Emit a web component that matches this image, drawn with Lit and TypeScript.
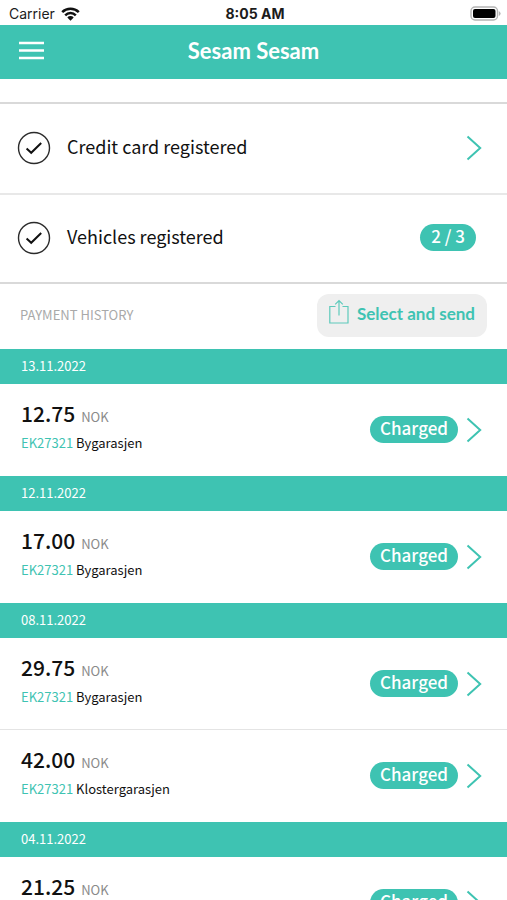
import { LitElement, html, svg, css } from "lit";
import { customElement, property } from "lit/decorators.js";

interface Payment {
  amount: string;
  plate: string;
  garage: string;
}

interface PaymentDay {
  date: string;
  payments: Payment[];
}

const plate = "EK27321";

const days: PaymentDay[] = [
  { date: "13.11.2022", payments: [{ amount: "12.75", plate, garage: "Bygarasjen" }] },
  { date: "12.11.2022", payments: [{ amount: "17.00", plate, garage: "Bygarasjen" }] },
  {
    date: "08.11.2022",
    payments: [
      { amount: "29.75", plate, garage: "Bygarasjen" },
      { amount: "42.00", plate, garage: "Klostergarasjen" },
    ],
  },
  { date: "04.11.2022", payments: [{ amount: "21.25", plate, garage: "Bygarasjen" }] },
];

const chevron = html`<svg class="chevron" width="16" height="26" viewBox="0 0 16 26" aria-hidden="true">
  ${svg`<path d="M1.5 1.5 L14.2 13 L1.5 24.5" fill="none" stroke="#3ec3b2" stroke-width="2" />`}
</svg>`;

const check = html`<svg width="34" height="34" viewBox="0 0 34 34" aria-hidden="true">
  ${svg`<circle cx="17" cy="17" r="15.5" fill="none" stroke="#2b2b2b" stroke-width="1.4" />
  <path d="M9.6 17.6 L14.2 21.8 L24.2 12" fill="none" stroke="#111" stroke-width="2" />`}
</svg>`;

const pill = css`
  .pill {
    box-sizing: border-box;
    min-width: 56px;
    padding: 0 10px 3px;
    border-radius: 14px;
    background: #3ec3b2;
    color: #fff;
    font-size: 17px;
    font-weight: 500;
    line-height: 24px;
    text-align: center;
  }
`;

@customElement("status-bar")
export class StatusBar extends LitElement {
  static styles = css`
    :host {
      display: grid;
      grid-template-columns: 1fr auto 1fr;
      align-items: center;
      box-sizing: border-box;
      height: 25px;
      padding: 2px 6px 0 9px;
      font: 14px/20px Inter, "Liberation Sans", sans-serif;
      color: #1c1c1c;
      flex: none;
    }
    .carrier {
      display: flex;
      align-items: center;
      gap: 6px;
    }
    .time {
      font-weight: 700;
    }
    .battery {
      justify-self: end;
    }
  `;

  render() {
    return html`
      <span class="carrier">
        Carrier
        <svg width="19" height="14" viewBox="0 0 19 14" aria-hidden="true">
          ${svg`<g fill="none" stroke="#111" stroke-width="2.5">
            <path d="M1.2 5.2 A11.8 11.8 0 0 1 17.8 5.2" />
            <path d="M4.2 8.3 A7.5 7.5 0 0 1 14.8 8.3" />
          </g>
          <path d="M6.3 10.4 A4.6 4.6 0 0 1 12.7 10.4 L9.5 13.7 Z" fill="#111" />`}
        </svg>
      </span>
      <span class="time">8:05 AM</span>
      <svg class="battery" width="31" height="15" viewBox="0 0 31 15" aria-hidden="true">
        ${svg`<rect x="1" y="1" width="26.5" height="13" rx="4" fill="#fff" stroke="#b4b4b4" stroke-width="1.4" />
        <rect x="3" y="3" width="22.5" height="9" rx="2" fill="#000" />
        <path d="M28.8 5 Q30.6 6 30.6 7.5 Q30.6 9 28.8 10 Z" fill="#b4b4b4" />`}
      </svg>
    `;
  }
}

@customElement("payment-row")
export class PaymentRow extends LitElement {
  @property({ attribute: false }) payment!: Payment;

  static styles = [
    pill,
    css`
      :host {
        display: block;
      }
      .row {
        display: flex;
        align-items: center;
        box-sizing: border-box;
        min-height: 92px;
        padding: 0 25px 1px 21px;
        color: #111;
        text-decoration: none;
      }
      .details {
        flex: 1;
        min-width: 0;
        padding-bottom: 6px;
      }
      .sum {
        display: flex;
        align-items: baseline;
        gap: 6px;
        line-height: 28px;
      }
      .amount {
        font-size: 21px;
        font-weight: 500;
      }
      .currency {
        font-size: 13px;
        color: #8a8a8a;
      }
      .place {
        font-size: 13px;
        line-height: 24px;
      }
      .plate {
        color: #3ec3b2;
      }
      .chevron {
        margin-left: 8px;
      }
    `,
  ];

  render() {
    const p = this.payment;
    return html`
      <a class="row" href="#payment">
        <div class="details">
          <div class="sum">
            <span class="amount">${p.amount}</span>
            <span class="currency">NOK</span>
          </div>
          <div class="place"><span class="plate">${p.plate}</span> ${p.garage}</div>
        </div>
        <span class="pill">Charged</span>
        ${chevron}
      </a>
    `;
  }
}

@customElement("app-root")
export class AppRoot extends LitElement {
  static styles = [
    pill,
    css`
      :host {
        display: flex;
        flex-direction: column;
        height: 100vh;
        background: #fff;
        color: #111;
        font-family: "Noto Sans CJK SC", "Noto Sans", sans-serif;
      }
      .header {
        display: grid;
        grid-template-columns: 1fr auto 1fr;
        align-items: center;
        flex: none;
        box-sizing: border-box;
        height: 54px;
        padding: 0 19px 3px;
        background: #3ec3b2;
        color: #fff;
      }
      .menu {
        display: grid;
        place-items: center;
        justify-self: start;
        padding: 0;
        border: 0;
        background: none;
      }
      .title {
        margin: 0;
        font: 700 22px/28px Lato, sans-serif;
      }
      .content {
        flex: 1;
        min-height: 0;
        overflow-y: auto;
        scrollbar-width: none;
      }
      .setup {
        padding-top: 23px;
        border-bottom: 2px solid #d9d9d9;
      }
      .item {
        display: flex;
        align-items: center;
        gap: 16px;
        box-sizing: border-box;
        height: 89px;
        padding: 0 25px 2px 17px;
        border-top: 2px solid #e8e8e8;
        color: inherit;
        font-size: 18px;
        line-height: 26px;
        text-decoration: none;
      }
      .item:first-child {
        height: 91px;
        border-top-color: #d9d9d9;
      }
      .label {
        flex: 1;
        padding-bottom: 4px;
      }
      .item .pill {
        margin-right: 6px;
      }
      .history-head {
        display: flex;
        align-items: center;
        justify-content: space-between;
        box-sizing: border-box;
        height: 65px;
        padding: 0 20px 2px;
      }
      .history-title {
        margin: 0;
        padding-bottom: 2px;
        color: #a9a9a9;
        font-size: 13px;
        font-weight: 400;
        line-height: 20px;
      }
      .send {
        display: flex;
        align-items: flex-start;
        gap: 8px;
        padding: 5px 12px 8px;
        border: 0;
        border-radius: 12px;
        background: #efefef;
        color: #3ec3b2;
        font: 700 17px/30px Lato, sans-serif;
      }
      .date {
        margin: 0;
        padding: 0 21px 2px;
        background: #3ec3b2;
        color: #fff;
        font-size: 13px;
        font-weight: 400;
        line-height: 33px;
      }
      .entry + .entry {
        box-shadow: 0 -1px 0 #e4e4e4;
      }
    `,
  ];

  render() {
    return html`
      <status-bar></status-bar>
      <header class="header">
        <button class="menu" aria-label="Menu">
          <svg width="25" height="19" viewBox="0 0 25 19" aria-hidden="true">
            ${svg`<path d="M0 2 H25 M0 9.5 H25 M0 17 H25" stroke="#fff" stroke-width="2.4" />`}
          </svg>
        </button>
        <h1 class="title">Sesam Sesam</h1>
      </header>
      <main class="content">
        <nav class="setup">
          <a class="item" href="#card">
            ${check}
            <span class="label">Credit card registered</span>
            ${chevron}
          </a>
          <a class="item" href="#vehicles">
            ${check}
            <span class="label">Vehicles registered</span>
            <span class="pill">2 / 3</span>
          </a>
        </nav>
        <div class="history-head">
          <h2 class="history-title">PAYMENT HISTORY</h2>
          <button class="send">
            <svg width="20" height="26" viewBox="0 0 20 26" aria-hidden="true">
              ${svg`<path d="M6.5 7.5 H0.8 V24 H19 V7.5 H13.5 M10 16.5 V2 M6.2 5.4 L10 1.6 L13.8 5.4"
                fill="none" stroke="#5ecabb" stroke-width="1.2" />`}
            </svg>
            Select and send
          </button>
        </div>
        ${days.map(
          (day) => html`
            <section>
              <h3 class="date">${day.date}</h3>
              ${day.payments.map((p) => html`<payment-row class="entry" .payment=${p}></payment-row>`)}
            </section>
          `,
        )}
      </main>
    `;
  }
}
